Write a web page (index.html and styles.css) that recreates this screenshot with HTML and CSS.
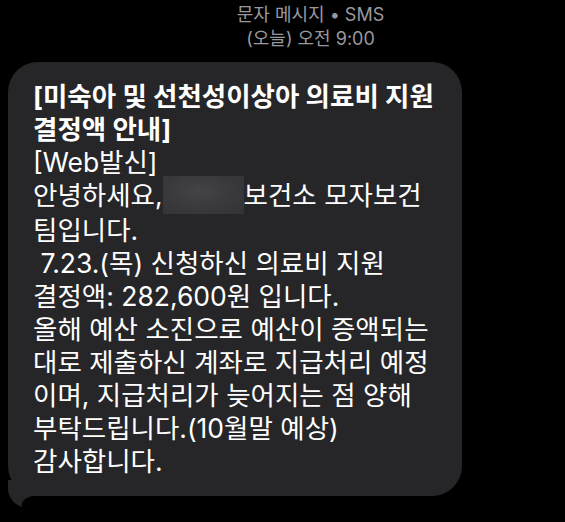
FILE: index.html
```html
<!DOCTYPE html>
<html lang="ko">
<head>
<meta charset="utf-8">
<link rel="stylesheet" href="styles.css">
</head>
<body>
<div class="header">
  <div>문자 메시지 • SMS</div>
  <div>(오늘) 오전 9:00</div>
</div>
<div class="bubble">
  <div class="line bold">[미숙아 및 선천성이상아 의료비 지원</div>
  <div class="line bold">결정액 안내]</div>
  <div class="line">[Web발신]</div>
  <div class="line">안녕하세요,<span class="redact"></span>보건소 모자보건</div>
  <div class="line">팀입니다.</div>
  <div class="line">&nbsp;7.23.(목) 신청하신 의료비 지원</div>
  <div class="line">결정액: 282,600원 입니다.</div>
  <div class="line">올해 예산 소진으로 예산이 증액되는</div>
  <div class="line">대로 제출하신 계좌로 지급처리 예정</div>
  <div class="line">이며, 지급처리가 늦어지는 점 양해</div>
  <div class="line">부탁드립니다.(10월말 예상)</div>
  <div class="line">감사합니다.</div>
  <svg class="tail" width="40" height="30" viewBox="0 0 40 30"><path d="M0 0 L0 10 C1 18 6 24 14 27 C13 24 14 19 24 16 L40 16 L40 0 Z" fill="#262628"/></svg>
</div>
</body>
</html>
```

FILE: styles.css
```css
html, body {
  margin: 0;
  padding: 0;
  background: #000;
}
body {
  width: 565px;
  height: 522px;
  overflow: hidden;
  font-family: "Inter", "Noto Sans CJK KR", "Noto Sans", sans-serif;
}
.header {
  padding: 3px 0 0 56px;
  text-align: center;
  color: #98989e;
  font-size: 18px;
  line-height: 24px;
}
.bubble {
  position: relative;
  box-sizing: border-box;
  margin: 11px 0 0 8px;
  width: 454px;
  height: 434px;
  padding: 18px 0 0 25px;
  background: #262628;
  border-radius: 30px;
  color: #fff;
  font-size: 26.5px;
  line-height: 32.9px;
}
.line {
  white-space: nowrap;
}
.bold {
  font-weight: 700;
}
.redact {
  display: inline-block;
  vertical-align: middle;
  width: 81px;
  height: 38px;
  margin: -4px 0 0 0;
  background: radial-gradient(ellipse at 45% 40%, #444446 0%, #39393b 55%, #333335 100%);
}
.tail {
  position: absolute;
  left: 0;
  top: 418px;
}
```
